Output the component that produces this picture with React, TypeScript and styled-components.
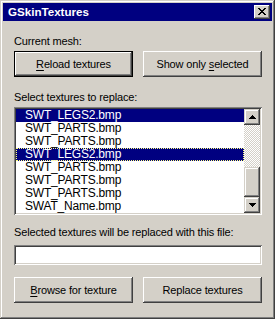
import React from "react";
import styled, { createGlobalStyle } from "styled-components";

const FACE = "#d4d0c8";
const NAVY = "#000080";

const Global = createGlobalStyle`
  html, body { margin: 0; padding: 0; background: ${FACE}; }
  body { font-family: "Liberation Sans", Arial, sans-serif; }
  * { box-sizing: border-box; }
`;

const Window = styled.div`
  width: 275px;
  height: 319px;
  background: ${FACE};
  padding: 3px;
  display: flex;
  flex-direction: column;
  box-shadow: inset -1px -1px #404040, inset 1px 1px ${FACE},
    inset -2px -2px #808080, inset 2px 2px #ffffff;
`;

const TitleBar = styled.div`
  height: 18px;
  background: ${NAVY};
  display: flex;
  align-items: center;
  justify-content: space-between;
  padding: 0 2px 0 5px;
`;

const TitleText = styled.span`
  color: #fff;
  font-weight: bold;
  font-size: 11.6px;
  line-height: 18px;
`;

const CloseButton = styled.div`
  width: 16px;
  height: 14px;
  background: ${FACE};
  display: flex;
  align-items: center;
  justify-content: center;
  padding-bottom: 1px;
  box-shadow: inset -1px -1px #404040, inset 1px 1px #ffffff,
    inset -2px -2px #808080, inset 2px 2px ${FACE};
`;

const Body = styled.div`
  display: flex;
  flex-direction: column;
  padding: 14px 10px 0 11px;
`;

const Label = styled.div<{ $mt?: number }>`
  font-size: 11px;
  line-height: 13px;
  letter-spacing: -0.15px;
  color: #000;
  margin-top: ${(p) => p.$mt ?? 0}px;
  white-space: nowrap;
`;

const ButtonRow = styled.div<{ $mt: number }>`
  display: grid;
  grid-template-columns: 119px 119px;
  column-gap: 10px;
  margin-top: ${(p) => p.$mt}px;
`;

const PushButton = styled.div<{ $default?: boolean }>`
  height: 26px;
  background: ${FACE};
  display: flex;
  align-items: center;
  justify-content: center;
  font-size: 11px;
  letter-spacing: -0.15px;
  color: #000;
  padding-bottom: 1px;
  white-space: nowrap;
  ${(p) =>
    p.$default
      ? `border: 1px solid #000;
         box-shadow: inset -1px -1px #404040, inset 1px 1px #ffffff,
           inset -2px -2px #808080;`
      : `box-shadow: inset -1px -1px #404040, inset 1px 1px #ffffff,
           inset -2px -2px #808080, inset 2px 2px ${FACE};`}
`;

const Mnemonic = styled.span`
  text-decoration: underline;
  text-underline-offset: 2px;
`;

const ListBox = styled.div`
  margin-top: 3px;
  height: 108px;
  padding: 2px;
  background: #fff;
  display: flex;
  box-shadow: inset 1px 1px #808080, inset -1px -1px #ffffff,
    inset 2px 2px #404040, inset -2px -2px ${FACE};
`;

const Items = styled.div`
  flex: 1;
  display: flex;
  flex-direction: column;
`;

const Item = styled.div<{ $selected?: boolean; $focus?: boolean }>`
  height: 13px;
  line-height: 13px;
  font-size: 12px;
  letter-spacing: -0.2px;
  padding-left: 9px;
  white-space: nowrap;
  background: ${(p) => (p.$selected ? NAVY : "#fff")};
  color: ${(p) => (p.$selected ? "#fff" : "#000")};
  ${(p) => (p.$focus ? `outline: 1px dotted #ffff80; outline-offset: -1px;` : "")}
`;

const ScrollBar = styled.div`
  width: 16px;
  display: flex;
  flex-direction: column;
`;

const ScrollButton = styled.div`
  width: 16px;
  height: 16px;
  background: ${FACE};
  display: flex;
  align-items: center;
  justify-content: center;
  box-shadow: inset -1px -1px #404040, inset 1px 1px ${FACE},
    inset -2px -2px #808080, inset 2px 2px #ffffff;
`;

const Track = styled.div`
  flex: 1;
  display: flex;
  flex-direction: column;
  justify-content: flex-end;
  background: conic-gradient(#ffffff 25%, ${FACE} 0 50%, #ffffff 0 75%, ${FACE} 0) 0 0 / 2px 2px;
`;

const Thumb = styled.div`
  height: 30px;
  background: ${FACE};
  box-shadow: inset -1px -1px #404040, inset 1px 1px ${FACE},
    inset -2px -2px #808080, inset 2px 2px #ffffff;
`;

const TextInput = styled.div`
  margin-top: 6px;
  height: 20px;
  background: #fff;
  box-shadow: inset 1px 1px #808080, inset -1px -1px #ffffff,
    inset 2px 2px #404040, inset -2px -2px ${FACE};
`;

const CloseGlyph = () => (
  <svg width="8" height="7" viewBox="0 0 8 7" shapeRendering="crispEdges">
    {[
      [0, 0], [1, 0], [6, 0], [7, 0],
      [1, 1], [2, 1], [5, 1], [6, 1],
      [2, 2], [3, 2], [4, 2], [5, 2],
      [3, 3], [4, 3],
      [2, 4], [3, 4], [4, 4], [5, 4],
      [1, 5], [2, 5], [5, 5], [6, 5],
      [0, 6], [1, 6], [6, 6], [7, 6],
    ].map(([x, y]) => (
      <rect key={`${x}-${y}`} x={x} y={y} width="1" height="1" fill="#000" />
    ))}
  </svg>
);

const Arrow = ({ down }: { down?: boolean }) => (
  <svg width="7" height="4" viewBox="0 0 7 4" shapeRendering="crispEdges">
    {[0, 1, 2, 3].map((i) => {
      const row = down ? i : 3 - i;
      return <rect key={i} x={row} y={i} width={7 - row * 2} height="1" fill="#000" />;
    })}
  </svg>
);

const files = [
  { name: "SWT_LEGS2.bmp", selected: true },
  { name: "SWT_PARTS.bmp" },
  { name: "SWT_PARTS.bmp" },
  { name: "SWT_LEGS2.bmp", selected: true, focus: true },
  { name: "SWT_PARTS.bmp" },
  { name: "SWT_PARTS.bmp" },
  { name: "SWT_PARTS.bmp" },
  { name: "SWAT_Name.bmp" },
];

export default function App() {
  return (
    <>
      <Global />
      <Window>
        <TitleBar>
          <TitleText>GSkinTextures</TitleText>
          <CloseButton>
            <CloseGlyph />
          </CloseButton>
        </TitleBar>
        <Body>
          <Label>Current mesh:</Label>
          <ButtonRow $mt={3}>
            <PushButton $default>
              <span>
                <Mnemonic>R</Mnemonic>eload textures
              </span>
            </PushButton>
            <PushButton>
              <span>
                Show only <Mnemonic>s</Mnemonic>elected
              </span>
            </PushButton>
          </ButtonRow>
          <Label $mt={14}>Select textures to replace:</Label>
          <ListBox>
            <Items>
              {files.map((f, i) => (
                <Item key={i} $selected={f.selected} $focus={f.focus}>
                  {f.name}
                </Item>
              ))}
            </Items>
            <ScrollBar>
              <ScrollButton>
                <Arrow />
              </ScrollButton>
              <Track>
                <Thumb />
              </Track>
              <ScrollButton>
                <Arrow down />
              </ScrollButton>
            </ScrollBar>
          </ListBox>
          <Label $mt={11}>Selected textures will be replaced with this file:</Label>
          <TextInput />
          <ButtonRow $mt={12}>
            <PushButton>
              <span>
                <Mnemonic>B</Mnemonic>rowse for texture
              </span>
            </PushButton>
            <PushButton>
              <span>Replace textures</span>
            </PushButton>
          </ButtonRow>
        </Body>
      </Window>
    </>
  );
}
